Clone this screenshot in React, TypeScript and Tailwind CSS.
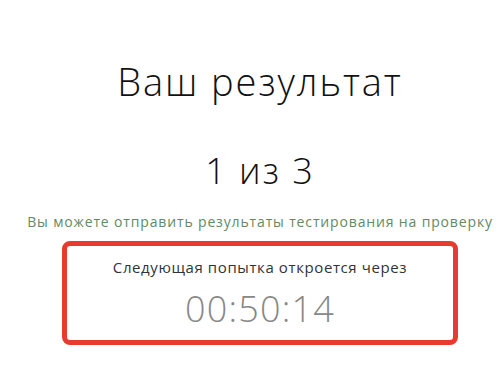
import React from "react";

export default function App() {
  return (
    <div className="w-[502px] h-[386px] bg-white overflow-hidden pl-[18px] flex flex-col items-center" style={{ fontFamily: "'Open Sans', sans-serif" }}>
      <h1 className="mt-[58px] text-[38px] leading-[46px] font-light tracking-[1.9px] text-[#111] whitespace-nowrap">Ваш результат</h1>
      <div className="mt-[45px] text-[36px] leading-[44px] font-light tracking-[2px] text-[#111] whitespace-nowrap">1 из 3</div>
      <p className="mt-[20px] text-[14px] leading-[18px] tracking-[0.85px] text-[#628a66] whitespace-nowrap">Вы можете отправить результаты тестирования на проверку</p>
      <div className="mt-[10px] w-[396px] h-[104px] border-[5px] border-[#e63b2e] rounded-[8px] flex flex-col items-center">
        <div className="mt-[11px] text-[15px] leading-[20px] tracking-[0.6px] text-[#333] whitespace-nowrap">Следующая попытка откроется через</div>
        <div className="mt-[11px] text-[36px] leading-[42px] font-light tracking-[1.2px] text-[#888] whitespace-nowrap">00:50:14</div>
      </div>
    </div>
  );
}
